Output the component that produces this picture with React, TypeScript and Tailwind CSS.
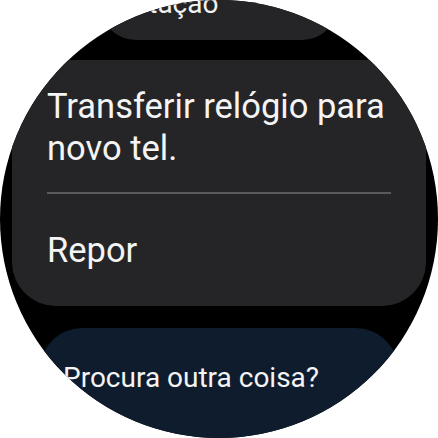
import React from "react";

export default function App() {
  return (
    <div className="w-[438px] h-[438px] bg-white" style={{ fontFamily: "Roboto, 'Noto Sans', sans-serif" }}>
      <div className="w-[438px] h-[438px] rounded-full overflow-hidden bg-black flex flex-col items-center">
        <div className="mt-[-40px] w-[238px] h-[80px] shrink-0 rounded-[36px] bg-[#252527] flex items-end pl-[15px] pb-[22px]">
          <span className="text-[28px] leading-[28px] text-[#f2f2f2]">Rotação</span>
        </div>
        <div className="mt-[20px] w-[414px] shrink-0 rounded-[44px] bg-[#252527] pt-[25px] pb-[35px] text-[#f4f4f4]">
          <div className="pl-[35px] text-[34.5px] leading-[42px]">
            Transferir relógio para
            <br />
            novo tel.
          </div>
          <div className="mx-[35px] mt-[23px] h-[2px] bg-[#5a5a5c]" />
          <div className="pl-[35px] mt-[35px] text-[34.5px] leading-[42px]">Repor</div>
        </div>
        <div className="mt-[22px] w-[360px] h-[200px] shrink-0 rounded-[44px] bg-[#0f1c2e] pt-[32px] pl-[24px] text-[#f4f4f4]">
          <div className="text-[28px] leading-[36px]">Procura outra coisa?</div>
        </div>
      </div>
    </div>
  );
}
